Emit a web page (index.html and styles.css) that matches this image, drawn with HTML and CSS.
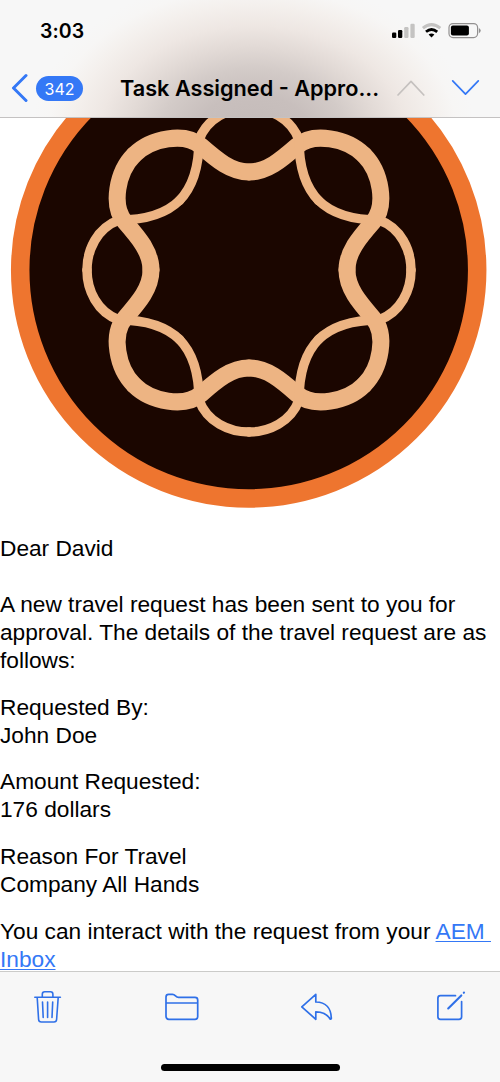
FILE: index.html
```html
<!DOCTYPE html>
<html lang="en">
<head>
<meta charset="utf-8">
<title>Task Assigned</title>
<link rel="stylesheet" href="styles.css">
</head>
<body>
<div class="screen">
  <header class="header">
    <div class="status">
      <span class="time">3:03</span>
      <svg class="status-icons" width="92" height="18" viewBox="391 22 92 18">
        <rect x="392" y="32.5" width="4.3" height="5.5" rx="1.2"/>
        <rect x="398" y="30" width="4.3" height="8" rx="1.2"/>
        <rect x="404.2" y="27" width="4.3" height="11" rx="1.2" fill="#c4c3c2"/>
        <rect x="410.4" y="23.7" width="4.3" height="14.3" rx="1.2" fill="#c4c3c2"/>
        <path d="M422.9 28.2Q431.5 21 440.3 28.2" fill="none" stroke="#c4c3c2" stroke-width="3"/>
        <path d="M426 31.8Q431.5 27.2 437.2 31.8" fill="none" stroke="#000" stroke-width="2.8"/>
        <path d="M428.6 34.6Q431.5 32.4 434.4 34.6L431.5 37.6Z"/>
        <rect x="449" y="23.6" width="28.6" height="14" rx="4" fill="none" stroke="#929090" stroke-width="1.2"/>
        <rect x="450.9" y="25.6" width="18" height="10" rx="2"/>
        <path d="M478.9 28Q480.7 29 480.7 30.6Q480.7 32.2 478.9 33.2Z" fill="#929090"/>
      </svg>
    </div>
    <nav class="nav">
      <svg class="back" width="18" height="30" viewBox="0 0 18 30"><path d="M16 2.5 3.5 15 16 27.5" fill="none" stroke="#3478f6" stroke-width="3" stroke-linecap="round" stroke-linejoin="round"/></svg>
      <span class="badge">342</span>
      <h1 class="title">Task Assigned - Appro...</h1>
      <svg class="arrows" width="84" height="18" viewBox="0 0 84 18" fill="none" stroke-width="1.7" stroke-linecap="round" stroke-linejoin="round">
        <path d="M1 16 14 2.3 26.8 16" stroke="#c5c1bf"/>
        <path d="M55.7 1.8 68.5 15.2 81.3 1.8" stroke="#3478f6"/>
      </svg>
    </nav>
  </header>
  <main class="mail">
    <svg class="logo" width="500" height="416" viewBox="0 118 500 416">
      <defs>
        <g id="strand" fill="none" stroke="#edb483" stroke-linecap="round">
          <path stroke-width="17" d="M0-98C-18-98-32-110-48-124C-64-138-98-132-115-115"/>
          <path stroke-width="9.5" d="M0-162C-20-162-42-152-50-130C-50-102-56-83-70-69"/>
        </g>
        <g id="pair"><use href="#strand"/><use href="#strand" transform="scale(-1 1)"/></g>
      </defs>
      <g class="emblem">
        <circle cx="248.7" cy="270" r="228.5" fill="#1b0600" stroke="#ee752f" stroke-width="18.5"/>
        <g transform="translate(249 270)">
          <use href="#pair"/>
          <use href="#pair" transform="rotate(90)"/>
          <use href="#pair" transform="rotate(180)"/>
          <use href="#pair" transform="rotate(270)"/>
        </g>
      </g>
    </svg>
    <div class="letter">
      <p class="greeting">Dear David</p>
      <p>A new travel request has been sent to you for<br>approval. The details of the travel request are as<br>follows:</p>
      <p>Requested By:<br>John Doe</p>
      <p>Amount Requested:<br>176 dollars</p>
      <p>Reason For Travel<br>Company All Hands</p>
      <p>You can interact with the request from your <a class="link" href="#">AEM&nbsp;<br>Inbox</a></p>
    </div>
  </main>
  <footer class="footer">
    <div class="tools">
      <svg width="28" height="34" viewBox="34 989 28 34"><g fill="none" stroke="#2f70e8" stroke-width="1.6" stroke-linecap="round" stroke-linejoin="round"><path d="M34.8 996.3H60.4M42.3 996V993.2Q42.3 990.8 44.7 990.8H50.5Q52.9 990.8 52.9 993.2V996M37.2 996.5 38.6 1018.5Q38.8 1021 41.3 1021H54Q56.4 1021 56.6 1018.5L58.2 996.5M42.5 1001 43.2 1016.5M47.6 1001V1016.5M52.7 1001 52 1016.5"/></g></svg>
      <svg width="34" height="28" viewBox="165 993 34 28"><path d="M166 1016V997Q166 994.4 168.6 994.4H172.5C175.5 994.4 175.5 997.4 178.5 997.4H195Q197.7 997.4 197.7 1000V1016.5Q197.7 1019.3 195 1019.3H168.8Q166 1019.3 166 1016ZM166 1003H197.7" fill="none" stroke="#2f70e8" stroke-width="1.7"/></svg>
      <svg width="32" height="28" viewBox="302 993 32 28"><path d="M302.8 1006.8 316.8 994.4V1002C327 1002.2 332.3 1008.5 332.3 1018.7L331.3 1019.2C328 1013.8 324 1011.8 316.8 1011.8V1019.3Z" fill="none" stroke="#2f70e8" stroke-width="1.7" stroke-linejoin="round"/></svg>
      <svg width="30" height="30" viewBox="436 991 30 30"><g fill="none" stroke="#2f70e8" stroke-width="1.7" stroke-linecap="round"><path d="M455.5 995.7H440.4Q437.9 995.7 437.9 998.2V1016.7Q437.9 1019.3 440.4 1019.3H459Q461.6 1019.3 461.6 1016.7V1001.5"/><path d="M448.2 1008.4 461.3 995.4M463.8 992.8l.2-.2" stroke-width="2.1"/></g></svg>
    </div>
    <div class="home"></div>
  </footer>
</div>
</body>
</html>
```
FILE: styles.css
```css
* { box-sizing: border-box; }
body { margin: 0; background: #fff; color: #000; }
.screen { width: 500px; height: 1082px; display: flex; flex-direction: column; overflow: hidden; }
.header {
  height: 118px; flex: none; border-bottom: 1px solid #c4c2c2;
  background: radial-gradient(ellipse 222px 160px at 253px 136px, #c3bab8 0%, #c8bfbd 26%, #d3cbc8 42%, #e2dad6 56%, #eee7e3 69%, #f4f0ed 82%, #f7f6f5 92%, #f7f7f7 100%) #f7f7f7;
  font-family: Inter, sans-serif;
}
.status { height: 60px; display: flex; justify-content: space-between; padding: 22px 17px 0 40px; }
.time { font-size: 19.5px; line-height: 18px; font-weight: 600; letter-spacing: 0.1px; }
.nav { height: 57px; display: flex; align-items: center; padding: 0 0 1px 10px; }
.back { margin-right: 8px; }
.badge { width: 47px; height: 25px; border-radius: 13px; background: #3478f6; color: #fff; font-size: 16px; line-height: 26px; text-align: center; }
.title { margin: 0 18px 0 37px; width: 259px; font-size: 21.7px; line-height: 28px; font-weight: 600; white-space: nowrap; }
.arrows { flex: none; }
.mail { height: 853px; flex: none; overflow: hidden; }
.logo { display: block; }
.emblem { filter: blur(0.7px); }
.letter { font: 22.7px/28px "Liberation Sans", Arial, sans-serif; white-space: nowrap; }
.letter p { margin: 0 0 18.7px; }
.letter .greeting { margin-bottom: 28px; }
.link { color: #3478f6; text-decoration-thickness: 1.3px; text-underline-offset: 2px; }
.footer { height: 111px; flex: none; border-top: 1px solid #cbcbc9; background: #f7f7f7; }
.tools { height: 92px; display: flex; justify-content: space-between; align-items: flex-start; padding: 18px 34px 0; }
.tools svg:nth-child(2), .tools svg:nth-child(3) { margin-top: 3px; }
.tools svg:nth-child(4) { margin-top: 1px; }
.home { width: 179px; height: 7px; margin: 0 auto; border-radius: 4px; background: #000; }
```
